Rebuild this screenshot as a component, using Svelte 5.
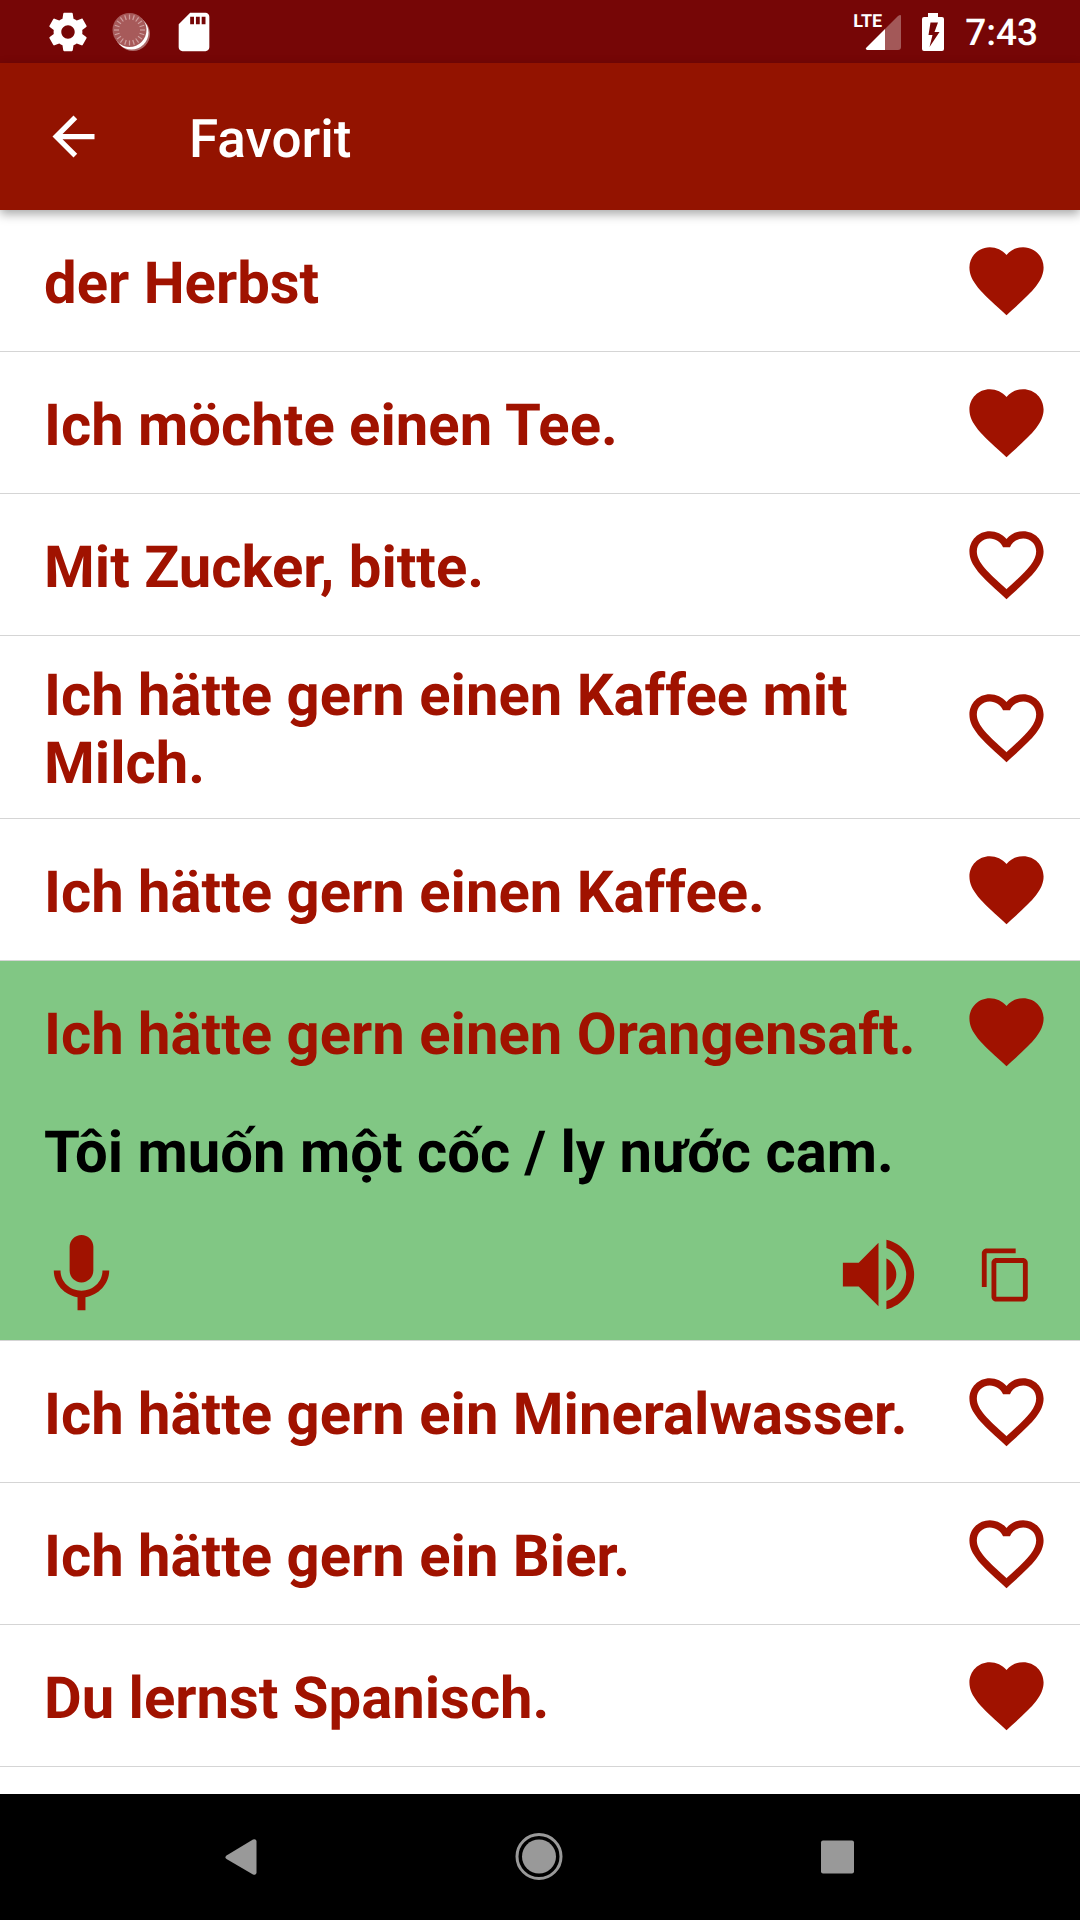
<script>
  let phrases = [
    { id: 1, de: "der Herbst", vi: "mùa thu", favorite: true },
    { id: 2, de: "Ich möchte einen Tee.", vi: "Tôi muốn một cốc trà.", favorite: true },
    { id: 3, de: "Mit Zucker, bitte.", vi: "Làm ơn cho đường.", favorite: false },
    { id: 4, de: "Ich hätte gern einen Kaffee mit Milch.", vi: "Tôi muốn một cốc cà phê sữa.", favorite: false },
    { id: 5, de: "Ich hätte gern einen Kaffee.", vi: "Tôi muốn một cốc cà phê.", favorite: true },
    { id: 6, de: "Ich hätte gern einen Orangensaft.", vi: "Tôi muốn một cốc / ly nước cam.", favorite: true },
    { id: 7, de: "Ich hätte gern ein Mineralwasser.", vi: "Tôi muốn một cốc nước khoáng.", favorite: false },
    { id: 8, de: "Ich hätte gern ein Bier.", vi: "Tôi muốn một cốc bia.", favorite: false },
    { id: 9, de: "Du lernst Spanisch.", vi: "Bạn học tiếng Tây Ban Nha.", favorite: true },
  ];

  let openId = 6;

  // tick marks of the sync spinner in the status bar
  const ticks = Array.from({ length: 20 }, (_, i) => i * 18);

  const heart =
    "M12 21.35l-1.45-1.32C5.4 15.36 2 12.28 2 8.5 2 5.42 4.42 3 7.5 3c1.74 0 3.41.81 4.5 2.09C13.09 3.81 14.76 3 16.5 3 19.58 3 22 5.42 22 8.5c0 3.78-3.4 6.86-8.55 11.54L12 21.35z";
  const heartBorder =
    "M16.5 3c-1.74 0-3.41.81-4.5 2.09C10.91 3.81 9.24 3 7.5 3 4.42 3 2 5.42 2 8.5c0 3.78 3.4 6.86 8.55 11.54L12 21.35l1.45-1.32C18.6 15.36 22 12.28 22 8.5 22 5.42 19.58 3 16.5 3zm-4.4 15.55l-.1.1-.1-.1C7.14 14.24 4 11.39 4 8.5 4 6.5 5.5 5 7.5 5c1.54 0 3.04.99 3.57 2.36h1.87C13.46 5.99 14.96 5 16.5 5c2 0 3.5 1.5 3.5 3.5 0 2.89-3.14 5.74-7.9 10.05z";

  function toggleOpen(phrase) {
    openId = openId === phrase.id ? null : phrase.id;
  }

  function toggleFavorite(phrase) {
    phrase.favorite = !phrase.favorite;
    phrases = phrases;
  }

  function speak(phrase) {
    const utterance = new SpeechSynthesisUtterance(phrase.de);
    utterance.lang = "de-DE";
    speechSynthesis.speak(utterance);
  }

  function copy(phrase) {
    navigator.clipboard.writeText(phrase.de);
  }
</script>

<div class="screen">
  <div class="status">
    <div class="notifications">
      <svg viewBox="0 0 24 24">
        <path d="M19.43 12.98c.04-.32.07-.64.07-.98s-.03-.66-.07-.98l2.11-1.65c.19-.15.24-.42.12-.64l-2-3.46c-.12-.22-.39-.3-.61-.22l-2.49 1c-.52-.4-1.08-.73-1.69-.98l-.38-2.65C14.46 2.18 14.25 2 14 2h-4c-.25 0-.46.18-.49.42l-.38 2.65c-.61.25-1.17.59-1.69.98l-2.49-1c-.23-.09-.49 0-.61.22l-2 3.46c-.13.22-.07.49.12.64l2.11 1.65c-.04.32-.07.65-.07.98s.03.66.07.98l-2.11 1.65c-.19.15-.24.42-.12.64l2 3.46c.12.22.39.3.61.22l2.49-1c.52.4 1.08.73 1.69.98l.38 2.65c.03.24.24.42.49.42h4c.25 0 .46-.18.49-.42l.38-2.65c.61-.25 1.17-.59 1.69-.98l2.49 1c.23.09.49 0 .61-.22l2-3.46c.12-.22.07-.49-.12-.64l-2.11-1.65zM12 15.5c-1.93 0-3.5-1.57-3.5-3.5s1.57-3.5 3.5-3.5 3.5 1.57 3.5 3.5-1.57 3.5-3.5 3.5z" />
      </svg>
      <svg viewBox="0 0 46 46">
        <circle cx="25" cy="25" r="17" opacity=".4" />
        <circle cx="23.5" cy="23.5" r="17" />
        <circle cx="21.5" cy="21" r="17" fill="#a75a5a" />
        {#each ticks as angle}
          <path d="M21.5 5.5v5" stroke="#cf9f9f" stroke-width="1.2" transform="rotate({angle} 21.5 21)" />
        {/each}
      </svg>
      <svg viewBox="0 0 24 24">
        <path d="M18 2h-8L4.02 8 4 20c0 1.1.9 2 2 2h12c1.1 0 2-.9 2-2V4c0-1.1-.9-2-2-2zm-6 6h-2V4h2v4zm3 0h-2V4h2v4zm3 0h-2V4h2v4z" />
      </svg>
    </div>
    <div class="system">
      <div class="signal">
        <svg viewBox="0 0 36 36">
          <path d="M36 2v31q0 3-3 3H20V15L33 2q3-2 3 0z" opacity=".33" />
          <path d="M20 15v21H2q-2-1-1-2z" />
        </svg>
        <span class="lte">LTE</span>
      </div>
      <svg class="battery" viewBox="0 0 22 38">
        <path fill-rule="evenodd" d="M6 0h10v4h4q2 0 2 2v30q0 2-2 2H2q-2 0-2-2V6q0-2 2-2h4zM8.5 9.5 6.500 22h4L7.500 34 17.500 19h-5l3.500-9.500z" />
      </svg>
      <span class="clock">7:43</span>
    </div>
  </div>

  <header>
    <button class="back" aria-label="Back">
      <svg viewBox="0 0 24 24">
        <path d="M20 11H7.83l5.59-5.59L12 4l-8 8 8 8 1.41-1.41L7.83 13H20v-2z" />
      </svg>
    </button>
    <h1>Favorit</h1>
  </header>

  <ul>
    {#each phrases as phrase (phrase.id)}
      <li class:open={phrase.id === openId}>
        <div class="row">
          <button class="phrase" on:click={() => toggleOpen(phrase)}>{phrase.de}</button>
          <button
            class="icon"
            aria-label="Favorite"
            aria-pressed={phrase.favorite}
            on:click={() => toggleFavorite(phrase)}
          >
            <svg class="heart" viewBox="0 0 24 24">
              <path d={phrase.favorite ? heart : heartBorder} />
            </svg>
          </button>
        </div>
        {#if phrase.id === openId}
          <p lang="vi">{phrase.vi}</p>
          <div class="actions">
            <button class="icon mic" aria-label="Record">
              <svg class="large" viewBox="0 0 24 24">
                <path d="M12 14c1.66 0 2.99-1.34 2.99-3L15 5c0-1.66-1.34-3-3-3S9 3.34 9 5v6c0 1.66 1.34 3 3 3zm5.3-3c0 3-2.54 5.1-5.3 5.1S6.7 14 6.7 11H5c0 3.41 2.72 6.23 6 6.72V21h2v-3.28c3.28-.48 6-3.3 6-6.72h-1.7z" />
              </svg>
            </button>
            <button class="icon" aria-label="Listen" on:click={() => speak(phrase)}>
              <svg class="large" viewBox="0 0 24 24">
                <path d="M3 9v6h4l5 5V4L7 9H3zm13.5 3c0-1.77-1.02-3.29-2.5-4.03v8.05c1.48-.73 2.5-2.25 2.5-4.02zM14 3.23v2.06c2.89.86 5 3.54 5 6.71s-2.11 5.85-5 6.71v2.06c4.01-.91 7-4.49 7-8.77s-2.99-7.86-7-8.77z" />
              </svg>
            </button>
            <button class="icon" aria-label="Copy" on:click={() => copy(phrase)}>
              <svg class="small" viewBox="0 0 24 24">
                <path d="M16 1H4c-1.1 0-2 .9-2 2v14h2V3h12V1zm3 4H8c-1.1 0-2 .9-2 2v14c0 1.1.9 2 2 2h11c1.1 0 2-.9 2-2V7c0-1.1-.9-2-2-2zm0 16H8V7h11v14z" />
              </svg>
            </button>
          </div>
        {/if}
      </li>
    {/each}
  </ul>

  <nav>
    <button aria-label="Back">
      <svg viewBox="0 0 48 48">
        <path d="M9.5 26q-2-2 0-3.500L36 6.500q3-1 3.500 1.500v32q-.5 2.500-3.500 1.500z" />
      </svg>
    </button>
    <button aria-label="Home">
      <svg viewBox="0 0 48 48">
        <circle cx="24" cy="23.5" r="17" />
        <circle cx="24" cy="23.5" r="22" fill="none" stroke="currentColor" stroke-width="3" />
      </svg>
    </button>
    <button aria-label="Recent apps">
      <svg viewBox="0 0 48 48">
        <rect x="8" y="7.5" width="33" height="33" rx="2" />
      </svg>
    </button>
  </nav>
</div>

<style>
  :global(body) {
    margin: 0;
    background: #fff;
  }

  .screen {
    display: flex;
    flex-direction: column;
    min-height: 100vh;
    font-family: Roboto, sans-serif;
    text-rendering: geometricPrecision;
  }

  button {
    margin: 0;
    padding: 0;
    border: 0;
    background: none;
    color: inherit;
    font: inherit;
    text-rendering: inherit;
    cursor: pointer;
  }

  svg {
    display: block;
    fill: currentColor;
  }

  .status {
    display: flex;
    justify-content: space-between;
    align-items: center;
    height: 63px;
    padding: 0 42px 0 45px;
    background: #760606;
    color: #fff;
  }

  .notifications {
    display: flex;
    gap: 17px;
  }

  .notifications svg {
    width: 46px;
    height: 46px;
  }

  .system {
    display: flex;
    align-items: center;
    gap: 21px;
  }

  .signal {
    position: relative;
  }

  .signal svg {
    width: 36px;
    height: 36px;
  }

  .lte {
    position: absolute;
    top: -2px;
    left: -12px;
    font: bold 18px/20px "Liberation Sans Narrow", Roboto, sans-serif;
  }

  .battery {
    width: 22px;
    height: 38px;
  }

  .clock {
    padding-top: 4px;
    font-size: 37px;
    font-weight: 500;
    line-height: 44px;
  }

  header {
    display: flex;
    align-items: center;
    gap: 84px;
    height: 147px;
    padding: 0 42px;
    background: #931300;
    color: #fff;
    box-shadow: 0 4px 10px rgba(0, 0, 0, 0.35);
    z-index: 1;
  }

  .back svg {
    width: 63px;
    height: 63px;
  }

  h1 {
    margin: 0;
    padding-top: 4px;
    font-size: 53px;
    font-weight: 500;
    line-height: 62px;
  }

  ul {
    flex: 1;
    margin: 0;
    padding: 0;
    list-style: none;
  }

  li {
    padding: 0 29px 0 44px;
    border-bottom: 1px solid #d5d5d5;
    color: #a01200;
    font-size: 58px;
    font-weight: 700;
    line-height: 68px;
  }

  li.open {
    background: #81c784;
  }

  .row {
    display: flex;
    align-items: center;
    gap: 34px;
    min-height: 141px;
  }

  .phrase {
    flex: 1;
    padding: 26px 0 20px;
    text-align: left;
  }

  .icon {
    display: flex;
    justify-content: center;
    width: 90px;
  }

  .icon svg {
    flex: none;
  }

  .heart {
    width: 89px;
    height: 89px;
  }

  .large {
    width: 95px;
    height: 95px;
  }

  .small {
    width: 58px;
    height: 58px;
  }

  p {
    margin: 17px 0 40px;
    color: #000;
  }

  .actions {
    display: flex;
    align-items: center;
    gap: 38px;
    margin-left: -8px;
    padding-bottom: 18px;
  }

  .mic {
    margin-right: auto;
  }

  nav {
    display: flex;
    justify-content: center;
    align-items: center;
    gap: 178px;
    height: 126px;
    padding-right: 2px;
    background: #000;
    color: #999;
  }

  nav button {
    display: flex;
    justify-content: center;
    width: 120px;
  }

  nav svg {
    width: 48px;
    height: 48px;
  }
</style>
